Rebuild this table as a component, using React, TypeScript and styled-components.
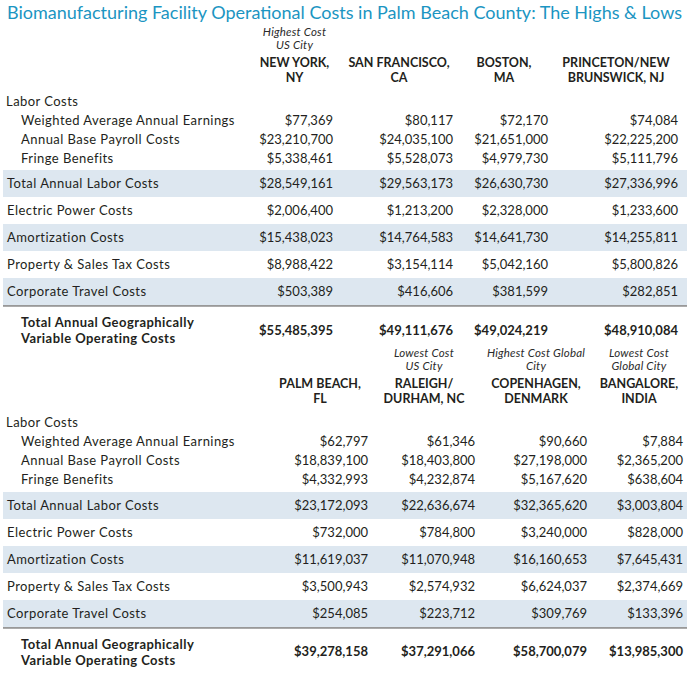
import React from "react";
import styled, { createGlobalStyle } from "styled-components";

const GlobalStyle = createGlobalStyle`
  html, body { margin: 0; padding: 0; background: #ffffff; }
  body { font-family: Lato, "Liberation Sans", sans-serif; color: #231f20; }
`;

type Col = { w: number; pad: number; hpad: number };

type SectionData = {
  label: number;
  cols: Col[];
  notes: string[];
  names: string[];
  earnings: string[];
  payroll: string[];
  fringe: string[];
  totalLabor: string[];
  electric: string[];
  amort: string[];
  property: string[];
  travel: string[];
  total: string[];
};

const sections: SectionData[] = [
  {
    label: 244,
    cols: [
      { w: 95, pad: 9, hpad: 0 },
      { w: 114, pad: 3, hpad: 0 },
      { w: 96, pad: 4, hpad: 0 },
      { w: 135, pad: 9, hpad: 7 },
    ],
    notes: ["Highest Cost\nUS City", "", "", ""],
    names: ["NEW YORK,\nNY", "SAN FRANCISCO,\nCA", "BOSTON,\nMA", "PRINCETON/NEW\nBRUNSWICK, NJ"],
    earnings: ["$77,369", "$80,117", "$72,170", "$74,084"],
    payroll: ["$23,210,700", "$24,035,100", "$21,651,000", "$22,225,200"],
    fringe: ["$5,338,461", "$5,528,073", "$4,979,730", "$5,111,796"],
    totalLabor: ["$28,549,161", "$29,563,173", "$26,630,730", "$27,336,996"],
    electric: ["$2,006,400", "$1,213,200", "$2,328,000", "$1,233,600"],
    amort: ["$15,438,023", "$14,764,583", "$14,641,730", "$14,255,811"],
    property: ["$8,988,422", "$3,154,114", "$5,042,160", "$5,800,826"],
    travel: ["$503,389", "$416,606", "$381,599", "$282,851"],
    total: ["$55,485,395", "$49,111,676", "$49,024,219", "$48,910,084"],
  },
  {
    label: 267,
    cols: [
      { w: 100, pad: 2, hpad: 0 },
      { w: 108, pad: 3, hpad: 0 },
      { w: 116, pad: 7, hpad: 0 },
      { w: 93, pad: 4, hpad: 3 },
    ],
    notes: ["", "Lowest Cost\nUS City", "Highest Cost Global\nCity", "Lowest Cost\nGlobal City"],
    names: ["PALM BEACH,\nFL", "RALEIGH/\nDURHAM, NC", "COPENHAGEN,\nDENMARK", "BANGALORE,\nINDIA"],
    earnings: ["$62,797", "$61,346", "$90,660", "$7,884"],
    payroll: ["$18,839,100", "$18,403,800", "$27,198,000", "$2,365,200"],
    fringe: ["$4,332,993", "$4,232,874", "$5,167,620", "$638,604"],
    totalLabor: ["$23,172,093", "$22,636,674", "$32,365,620", "$3,003,804"],
    electric: ["$732,000", "$784,800", "$3,240,000", "$828,000"],
    amort: ["$11,619,037", "$11,070,948", "$16,160,653", "$7,645,431"],
    property: ["$3,500,943", "$2,574,932", "$6,624,037", "$2,374,669"],
    travel: ["$254,085", "$223,712", "$309,769", "$133,396"],
    total: ["$39,278,158", "$37,291,066", "$58,700,079", "$13,985,300"],
  },
];

const Page = styled.div`
  width: 690px;
  padding: 0 3px;
  box-sizing: border-box;
`;

const Title = styled.h1`
  margin: 0;
  padding: 0 0 0 4px;
  height: 24.5px;
  font-family: Lato, "Liberation Sans", sans-serif;
  font-weight: 400;
  font-size: 18px;
  line-height: 24px;
  color: #1b95c2;
  white-space: nowrap;
`;

const Grid = styled.div<{ $cols: string; $shade?: boolean; $h?: number }>`
  display: grid;
  grid-template-columns: ${(p) => p.$cols};
  align-items: center;
  background: ${(p) => (p.$shade ? "#dde7f0" : "transparent")};
  height: ${(p) => (p.$h ? `${p.$h}px` : "auto")};
`;

const NotesRow = styled(Grid)`
  align-items: end;
  height: 26px;
`;

const NamesRow = styled(Grid)`
  margin-top: 4px;
  margin-bottom: 7px;
  align-items: start;
`;

const Note = styled.div<{ $hpad: number }>`
  font-style: italic;
  font-weight: 400;
  font-size: 11.5px;
  letter-spacing: 0.2px;
  line-height: 13px;
  color: #2b2b2b;
  text-align: center;
  white-space: pre-line;
  padding-right: ${(p) => p.$hpad}px;
`;

const Name = styled.div<{ $hpad: number }>`
  font-weight: 700;
  font-size: 12.5px;
  line-height: 15px;
  color: #231f20;
  text-align: center;
  white-space: pre-line;
  padding-right: ${(p) => p.$hpad}px;
`;

const Label = styled.div<{ $indent: number; $bold?: boolean }>`
  padding-left: ${(p) => p.$indent}px;
  font-size: 13px;
  letter-spacing: 0.45px;
  font-weight: ${(p) => (p.$bold ? 700 : 400)};
  line-height: ${(p) => (p.$bold ? "16px" : "19px")};
  white-space: ${(p) => (p.$bold ? "pre-line" : "nowrap")};
`;

const Value = styled.div<{ $pad: number; $bold?: boolean }>`
  text-align: right;
  padding-right: ${(p) => p.$pad}px;
  font-size: 13px;
  font-weight: ${(p) => (p.$bold ? 700 : 400)};
  line-height: 19px;
  white-space: nowrap;
`;

const LaborGroup = styled.div`
  margin-bottom: 2.5px;
`;

const Rule = styled.div`
  height: 2px;
  background: linear-gradient(#8f8f8f, #b5b5b5);
`;

const TotalRow = styled(Grid)`
  padding-top: 7px;
  height: 32px;
`;

function Section({ d }: { d: SectionData }) {
  const template = `${d.label}px ${d.cols.map((c) => `${c.w}px`).join(" ")}`;
  const values = (vals: string[], bold?: boolean) =>
    vals.map((v, i) => (
      <Value key={i} $pad={d.cols[i].pad} $bold={bold}>
        {v}
      </Value>
    ));
  const bands: [string, string[]][] = [
    ["Total Annual Labor Costs", d.totalLabor],
    ["Electric Power Costs", d.electric],
    ["Amortization Costs", d.amort],
    ["Property & Sales Tax Costs", d.property],
    ["Corporate Travel Costs", d.travel],
  ];
  return (
    <div>
      <NotesRow $cols={template}>
        <div />
        {d.notes.map((n, i) => (
          <Note key={i} $hpad={d.cols[i].hpad}>
            {n}
          </Note>
        ))}
      </NotesRow>
      <NamesRow $cols={template}>
        <div />
        {d.names.map((n, i) => (
          <Name key={i} $hpad={d.cols[i].hpad}>
            {n}
          </Name>
        ))}
      </NamesRow>
      <LaborGroup>
        <Grid $cols={template}>
          <Label $indent={3}>Labor Costs</Label>
        </Grid>
        <Grid $cols={template}>
          <Label $indent={18}>Weighted Average Annual Earnings</Label>
          {values(d.earnings)}
        </Grid>
        <Grid $cols={template}>
          <Label $indent={18}>Annual Base Payroll Costs</Label>
          {values(d.payroll)}
        </Grid>
        <Grid $cols={template}>
          <Label $indent={18}>Fringe Benefits</Label>
          {values(d.fringe)}
        </Grid>
      </LaborGroup>
      {bands.map(([label, vals], i) => (
        <Grid key={label} $cols={template} $shade={i % 2 === 0} $h={27}>
          <Label $indent={4}>{label}</Label>
          {values(vals)}
        </Grid>
      ))}
      <Rule />
      <TotalRow $cols={template}>
        <Label $indent={18} $bold>
          {"Total Annual Geographically\nVariable Operating Costs"}
        </Label>
        {values(d.total, true)}
      </TotalRow>
    </div>
  );
}

export default function App() {
  return (
    <Page>
      <GlobalStyle />
      <Title>Biomanufacturing Facility Operational Costs in Palm Beach County: The Highs &amp; Lows</Title>
      {sections.map((s, i) => (
        <Section key={i} d={s} />
      ))}
    </Page>
  );
}
